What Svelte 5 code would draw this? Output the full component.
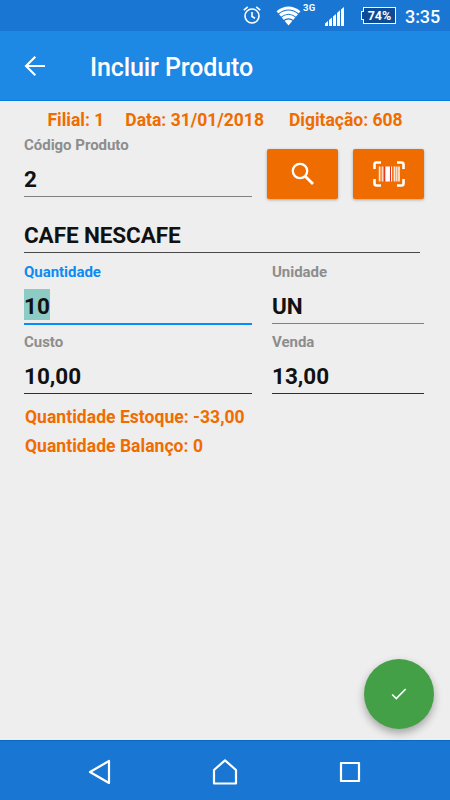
<script>
  const info = [
    { text: 'Filial: 1', gap: 21 },
    { text: 'Data: 31/01/2018', gap: 25 },
    { text: 'Digitação: 608', gap: 0 }
  ];
  const stock = ['Quantidade Estoque: -33,00', 'Quantidade Balanço: 0'];
</script>

{#snippet field(label, value, kind)}
  <div class="field {kind}">
    <div class="label">{label}</div>
    <div class="value"><span>{value}</span></div>
  </div>
{/snippet}

<div class="screen">
  <div class="status">
    <svg class="alarm" width="18" height="20" viewBox="0 0 18 20" fill="none" stroke="#fff" stroke-width="1.6">
      <circle cx="9" cy="11" r="7" />
      <path d="M9 7v4.500l3 1.800M.8 5.200 4.800 1.800M17.200 5.200l-4-3.400" />
    </svg>
    <svg class="wifi" width="26" height="20" viewBox="0 0 26 20" fill="none" stroke="#fff">
      <path d="M12.500 19.500.5 5.200Q12.500-4 24.500 5.200Z" fill="#fff" stroke="none" />
      <path d="M2 8.200Q12.500-.3 23 8.200M4.500 11.700Q12.500 4.900 20.500 11.700M7.500 14.800Q12.500 11 17.500 14.800" stroke="#1976d2" stroke-width="1.100" />
    </svg>
    <span class="net">3G</span>
    <svg class="signal" width="20" height="19" viewBox="0 0 20 19" fill="#fff">
      <path d="M0 19v-2.500L3 14v5zM4 19v-6l3-2.600V19zM8 19V9.600l3-2.700V19zM12 19V6l3-2.700V19zM16 19V2.500L19 0v19z" />
    </svg>
    <div class="battery"><i></i><span>74%</span></div>
    <span class="clock">3:35</span>
  </div>

  <header>
    <svg width="22" height="22" viewBox="0 0 22 22" fill="none" stroke="#fff" stroke-width="2.100">
      <path d="M21 11H2M11.300 1.700 2 11l9.300 9.300" />
    </svg>
    <h1>Incluir Produto</h1>
  </header>

  <main>
    <div class="info">
      {#each info as item}
        <span style="margin-right: {item.gap}px">{item.text}</span>
      {/each}
    </div>

    <div class="row first">
      {@render field('Código Produto', '2', 'wide')}
      <button aria-label="Pesquisar">
        <svg width="24" height="24" viewBox="0 0 24 24" fill="none" stroke="#fff" stroke-width="2.300">
          <circle cx="9" cy="9" r="7.200" />
          <path d="m14.200 14.200 7.800 7.800" stroke-width="2.800" />
        </svg>
      </button>
      <button aria-label="Código de barras">
        <svg width="32" height="26" viewBox="0 0 32 26" fill="none" stroke="#fff">
          <path d="M1.500 8V3.500q0-2 2-2H8M24 1.500h4.500q2 0 2 2V8M30.500 18v4.500q0 2-2 2H24M8 24.500H3.500q-2 0-2-2V18" stroke-width="2.600" />
          <path d="M6.600 5.500v15M26 5.500v15M21.500 5.500v15" stroke-width="1.700" stroke="#ffe9dc" />
          <path d="M9.500 5.500v15M23.700 5.500v15" stroke-width="1.800" stroke="#ffd8bd" />
          <path d="M14.700 5.500v15" stroke-width="5" />
          <path d="M18.500 5.500v15" stroke-width="1.200" />
          <path d="M11.700 5.500v15M17.500 5.500v15" stroke="#e5322d" stroke-width="1" />
        </svg>
      </button>
    </div>

    <div class="name">CAFE NESCAFE</div>

    <div class="row">
      {@render field('Quantidade', '10', 'wide active')}
      {@render field('Unidade', 'UN', 'narrow')}
    </div>
    <div class="row second">
      {@render field('Custo', '10,00', 'wide dark')}
      {@render field('Venda', '13,00', 'narrow dark')}
    </div>

    <div class="stock">
      {#each stock as line}
        <div>{line}</div>
      {/each}
    </div>

    <button class="fab" aria-label="Confirmar">
      <svg width="16" height="12" viewBox="0 0 16 12" fill="none" stroke="#fff" stroke-width="1.700">
        <path d="m1.200 6.500 4.100 4L14.700 1" />
      </svg>
    </button>
  </main>

  <nav>
    <svg width="24" height="28" viewBox="0 0 24 28"><path d="M21 3v22L2 14z" /></svg>
    <svg class="home" width="26" height="28" viewBox="0 0 26 28"><path d="M2 25.500V12L13 2.300 24 12v13.500z" /></svg>
    <svg width="22" height="22" viewBox="0 0 22 22"><path d="M2 2h18v18H2z" /></svg>
  </nav>
</div>

<style>
  .screen {
    width: 450px;
    height: 800px;
    display: flex;
    flex-direction: column;
    overflow: hidden;
    background: #eee;
    font-family: Roboto, sans-serif;
    font-weight: 700;
  }
  .status {
    height: 31px;
    flex: none;
    display: flex;
    align-items: flex-start;
    background: #1976d2;
    color: #fff;
  }
  .alarm { margin: 5px 0 0 243px; }
  .wifi { margin: 6px 0 0 15px; }
  .net { margin: 2px 0 0 1px; width: 14px; font-size: 9.500px; line-height: 11px; letter-spacing: .3px; }
  .signal { margin: 7px 0 0 8px; }
  .battery {
    position: relative;
    box-sizing: border-box;
    width: 33px;
    height: 17px;
    margin: 7px 0 0 18px;
    border: 1px solid #fff;
    background: #0d4b97;
    font-size: 12.500px;
    line-height: 16px;
    text-align: center;
  }
  .battery i {
    position: absolute;
    left: -3px;
    top: 3px;
    width: 2px;
    height: 7px;
    border: 1px solid #fff;
    border-right: 0;
    background: #0d4b97;
  }
  .battery span { position: relative; }
  .clock { margin: 5px 0 0 9px; font-size: 18px; line-height: 23px; font-weight: 500; letter-spacing: -.1px; }
  header {
    box-sizing: border-box;
    height: 70px;
    flex: none;
    display: flex;
    align-items: center;
    padding: 1px 0 0 24px;
    background: #1e88e5;
    border-bottom: 1px solid #087ce3;
    color: #fff;
  }
  h1 { margin: 4px 0 0 44px; font-size: 25px; line-height: 30px; font-weight: 500; letter-spacing: -.1px; }
  main { position: relative; flex: 1; }
  .info {
    display: flex;
    height: 20px;
    padding: 9px 0 0 47.500px;
    color: #ef6c00;
    font-size: 17.500px;
    line-height: 20px;
    white-space: nowrap;
  }
  .row { display: flex; padding-left: 24px; }
  .first { height: 67px; padding-top: 5px; }
  .second { height: 61px; }
  .field { box-sizing: border-box; height: 70px; }
  .first .field { height: 62px; }
  .wide { width: 228px; }
  .narrow { width: 152px; margin-left: 20px; }
  .label { height: 18px; color: #8d8d8d; font-size: 15px; line-height: 20px; letter-spacing: -.03px; }
  .value {
    box-sizing: border-box;
    height: 44px;
    padding-top: 9px;
    border-bottom: 1px solid #808080;
    color: #111;
    font-size: 22.500px;
    line-height: 30px;
  }
  .value span { display: inline-block; height: 31px; line-height: 34px; }
  .active .label { color: #0d8bf2; }
  .active .value { height: 45px; border-bottom: 2px solid #078dfb; }
  .active span { background: #8cccc4; }
  .dark .value { border-color: #303030; }
  button {
    width: 71px;
    height: 50px;
    margin: 14px 0 0 15px;
    padding: 0;
    border: 0;
    border-radius: 2px;
    background: #ef6c00;
    box-shadow: 0 1px 3px rgba(0, 0, 0, .3);
    display: flex;
    align-items: center;
    justify-content: center;
  }
  .name {
    box-sizing: border-box;
    width: 396px;
    height: 33px;
    margin: 18px 0 9px 24px;
    border-bottom: 1px solid #484848;
    color: #111;
    font-size: 22.500px;
    line-height: 31px;
    letter-spacing: -.1px;
  }
  .stock { padding: 10px 0 0 25px; color: #ef6c00; font-size: 17.500px; line-height: 29px; letter-spacing: .04px; }
  .fab {
    position: absolute;
    right: 16px;
    bottom: 11px;
    width: 70px;
    height: 70px;
    margin: 0;
    border-radius: 50%;
    background: #43a047;
    box-shadow: 0 4px 8px rgba(0, 0, 0, .32);
  }
  nav {
    box-sizing: border-box;
    height: 60px;
    flex: none;
    display: flex;
    align-items: center;
    justify-content: space-between;
    padding: 3px 89px 0 88px;
    border-top: 1px solid #0868c4;
    background: #1976d2;
  }
  nav path { fill: none; stroke: #fff; stroke-width: 2.200; stroke-linejoin: round; }
  .home { margin-right: 2px; }
</style>
